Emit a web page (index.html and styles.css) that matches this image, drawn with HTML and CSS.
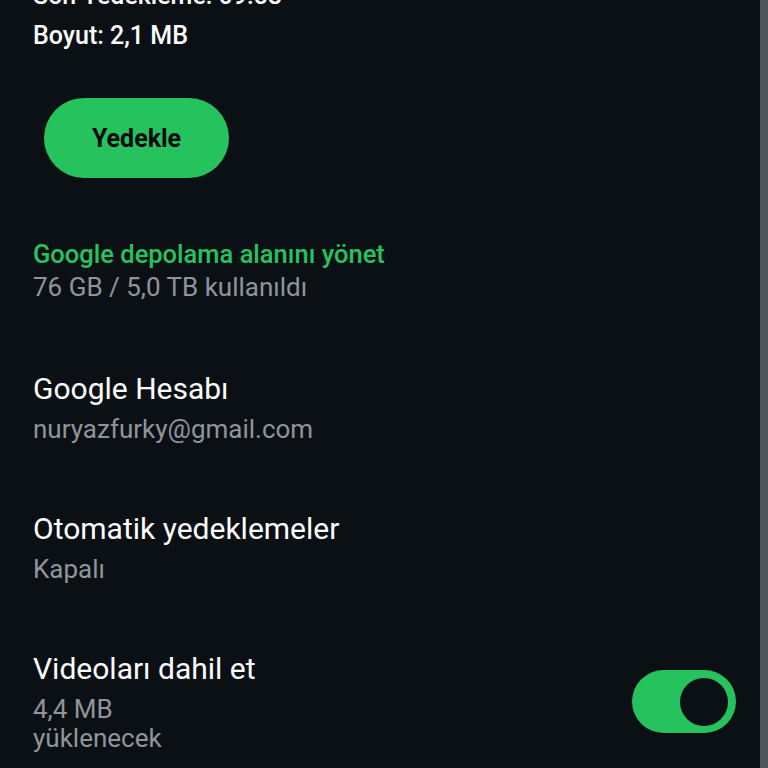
FILE: index.html
```html
<!DOCTYPE html>
<html lang="tr">
<head>
    <meta charset="UTF-8">
    <meta name="viewport" content="width=device-width, initial-scale=1.0">
    <title>Sohbet yedeklemesi</title>
    <link rel="stylesheet" href="styles.css">
</head>
<body>
    <div class="screen">
        <main class="content">
            <!-- Last backup info -->
            <section class="backup-info">
                <p class="info-line cut">Son Yedekleme: 09:58</p>
                <p class="info-line">Boyut: 2,1 MB</p>
            </section>

            <button class="backup-btn">Yedekle</button>

            <!-- Storage -->
            <section class="row storage">
                <p class="link">Google depolama alanını yönet</p>
                <p class="sub">76 GB / 5,0 TB kullanıldı</p>
            </section>

            <section class="row">
                <p class="title">Google Hesabı</p>
                <p class="sub">nuryazfurky@gmail.com</p>
            </section>

            <section class="row">
                <p class="title">Otomatik yedeklemeler</p>
                <p class="sub">Kapalı</p>
            </section>

            <section class="row toggle-row">
                <div class="row-text">
                    <p class="title">Videoları dahil et</p>
                    <p class="sub">4,4 MB<br>yüklenecek</p>
                </div>
                <div class="switch on"><span class="knob"></span></div>
            </section>
        </main>
        <div class="scrollbar"></div>
    </div>
</body>
</html>
```

FILE: styles.css
```css
/* General */
body {
    margin: 0;
    background-color: #0b1015;
    font-family: Roboto, "Noto Sans", sans-serif;
    color: #ffffff;
    overflow: hidden;
}

p {
    margin: 0;
}

.screen {
    display: flex;
    height: 768px;
}

.content {
    flex: 1;
    padding-left: 33px;
    margin-top: -24px;
}

.scrollbar {
    width: 8px;
    background-color: #50565d;
}

/* Backup info */
.info-line {
    font-size: 25px;
    font-weight: 500;
    line-height: 40px;
}

.backup-btn {
    display: block;
    margin: 42px 0 0 11px;
    width: 185px;
    height: 80px;
    border: none;
    border-radius: 40px;
    background-color: #25c25e;
    color: #050a08;
    font-family: Roboto, sans-serif;
    font-size: 25px;
    font-weight: 700;
}

/* Rows */
.row {
    margin-top: 64px;
}

.storage {
    margin-top: 60px;
    padding-bottom: 2px;
}

.link {
    color: #26c25f;
    font-size: 25.5px;
    font-weight: 500;
    line-height: 33px;
}

.title {
    font-size: 30px;
    line-height: 38px;
}

.sub {
    color: #90959a;
    font-size: 26px;
    line-height: 33px;
    margin-top: 5px;
}

.storage .sub {
    margin-top: 0;
}

/* Toggle */
.toggle-row {
    display: flex;
    align-items: center;
    justify-content: space-between;
    padding-right: 24px;
}

.toggle-row .sub {
    line-height: 29px;
    margin-top: 7px;
}

.switch {
    width: 104px;
    height: 63px;
    border-radius: 32px;
    background-color: #25c25e;
    display: flex;
    align-items: center;
    justify-content: flex-end;
    padding-right: 8px;
    box-sizing: border-box;
}

.knob {
    width: 48px;
    height: 48px;
    border-radius: 50%;
    background-color: #0b1015;
}
```
